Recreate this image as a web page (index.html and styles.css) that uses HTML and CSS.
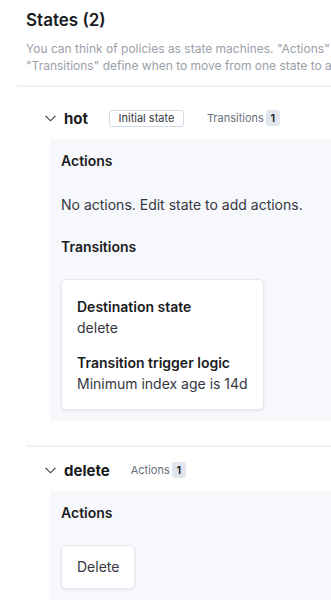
FILE: index.html
```html
<!DOCTYPE html>
<html lang="en">
<head>
  <meta charset="UTF-8" />
  <meta name="viewport" content="width=device-width, initial-scale=1.0"/>
  <title>States</title>
  <link rel="stylesheet" href="styles.css">
</head>
<body>
  <div class="page">
    <div class="intro">
      <h2>States (2)</h2>
      <p class="desc">You can think of policies as state machines. "Actions" are operations that run in a state.<br>"Transitions" define when to move from one state to another.</p>
    </div>
    <hr class="rule first">

    <!-- hot state -->
    <div class="state">
      <div class="state-head">
        <svg class="chevron" width="11" height="7" viewBox="0 0 11 7"><polyline points="0.5,0.8 5.5,5.8 10.5,0.8" fill="none" stroke="#343741" stroke-width="1.1"/></svg>
        <span class="state-name">hot</span>
        <span class="badge">Initial state</span>
        <span class="meta">Transitions <span class="count">1</span></span>
      </div>
      <div class="panel">
        <h3>Actions</h3>
        <p class="empty">No actions. Edit state to add actions.</p>
        <h3>Transitions</h3>
        <div class="card transition">
          <div class="label">Destination state</div>
          <div class="value">delete</div>
          <div class="label gap">Transition trigger logic</div>
          <div class="value">Minimum index age is 14d</div>
        </div>
      </div>
    </div>

    <hr class="rule">

    <!-- delete state -->
    <div class="state second">
      <div class="state-head">
        <svg class="chevron" width="11" height="7" viewBox="0 0 11 7"><polyline points="0.5,0.8 5.5,5.8 10.5,0.8" fill="none" stroke="#343741" stroke-width="1.1"/></svg>
        <span class="state-name">delete</span>
        <span class="meta">Actions <span class="count">1</span></span>
      </div>
      <div class="panel">
        <h3>Actions</h3>
        <div class="card action">Delete</div>
      </div>
    </div>
  </div>
</body>
</html>
```

FILE: styles.css
```css
body {
  margin: 0;
  font-family: Inter, "Noto Sans", sans-serif;
  color: #343741;
  background: #fff;
  overflow: hidden;
}
.page {
  width: 560px;
  padding-left: 17px;
}
.intro {
  padding-left: 9px;
}
h2 {
  margin: 8px 0 0;
  font-size: 17px;
  line-height: 24px;
  font-weight: 600;
  color: #1a1c21;
}
.desc {
  margin: 8px 0 0;
  font-size: 12px;
  line-height: 17px;
  color: #9aa0a9;
  white-space: nowrap;
}
.rule {
  border: none;
  border-top: 2px solid #eef1f6;
  margin: 11px 0 0;
}
.rule:not(.first) {
  margin: 24px 0 0 9px;
}
.state {
  padding-left: 28px;
}
.state-head {
  display: flex;
  align-items: center;
  height: 24px;
  margin-top: 19px;
}
.state.second .state-head {
  margin-top: 11px;
}
.chevron {
  margin-right: 8px;
}
.state-name {
  font-size: 15px;
  font-weight: 700;
  color: #1a1c21;
  margin-right: 21px;
}
.badge {
  font-size: 11px;
  line-height: 15px;
  padding: 0 8.5px;
  border: 1px solid #d3dae6;
  border-radius: 3px;
  color: #343741;
  margin-right: 23px;
}
.meta {
  font-size: 11px;
  color: #69707d;
  display: flex;
  align-items: center;
  gap: 2px;
}
.count {
  display: inline-block;
  min-width: 14px;
  text-align: center;
  line-height: 16px;
  border-radius: 3px;
  background: #e0e5ee;
  color: #1a1c21;
  font-weight: 600;
  font-size: 11px;
}
.panel {
  margin-top: 9px;
  margin-left: 5px;
  background: #f7f8fc;
  padding: 12px 11px 11px;
}
h3 {
  margin: 0;
  font-size: 14px;
  line-height: 20px;
  font-weight: 600;
  color: #1a1c21;
}
.empty {
  margin: 24px 0 22px;
  font-size: 14px;
  line-height: 20px;
}
.card {
  background: #fff;
  border: 1px solid #e3e8f2;
  border-radius: 5px;
  box-shadow: 0 1px 3px rgba(0, 0, 0, 0.08);
}
.transition {
  width: fit-content;
  margin-top: 22px;
  padding: 16px 15px 15px;
}
.label {
  font-size: 14px;
  line-height: 21px;
  font-weight: 600;
  color: #1a1c21;
}
.label.gap {
  margin-top: 14px;
}
.value {
  font-size: 14px;
  line-height: 21px;
}
.action {
  display: inline-block;
  margin-top: 22px;
  padding: 0 15px;
  line-height: 42px;
  font-size: 14px;
}
```
